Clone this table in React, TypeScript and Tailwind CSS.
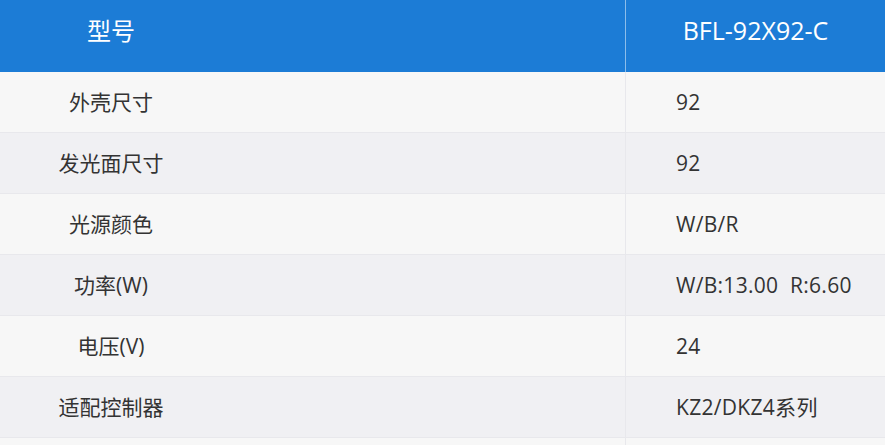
const ROWS = [
  { label: '外壳尺寸', value: '92' },
  { label: '发光面尺寸', value: '92' },
  { label: '光源颜色', value: 'W/B/R' },
  { label: '功率(W)', value: 'W/B:13.00\u00a0\u00a0R:6.60' },
  { label: '电压(V)', value: '24' },
  { label: '适配控制器', value: 'KZ2/DKZ4系列' },
  { label: '', value: '' },
]

export default function App() {
  return (
    <div
      className="w-[885px] h-[445px] overflow-hidden bg-[#f7f7f7] text-[#333]"
      style={{ fontFamily: '"Open Sans", "Noto Sans CJK SC", sans-serif' }}
    >
      {/* header */}
      <div className="grid grid-cols-[626px_1fr] h-[72px] bg-[#1c7cd6] text-white">
        <div className="flex items-center pb-[10px] border-r border-[#8cbdea]">
          <span className="w-[222px] text-center text-[24px]">型号</span>
        </div>
        <div className="flex items-center justify-center pb-[10px] text-[25px]">BFL-92X92-C</div>
      </div>

      {ROWS.map((row, i) => (
        <div
          key={i}
          className={`grid grid-cols-[626px_1fr] h-[61px] border-b border-[#e8e8ec] text-[21px] ${
            i % 2 === 0 ? 'bg-[#f7f7f7]' : 'bg-[#f0f0f3]'
          }`}
        >
          <div className="flex items-center pt-[2px] border-r border-[#e8e8ec]">
            <span className="w-[222px] text-center">{row.label}</span>
          </div>
          <div className="flex items-center pt-[2px] pl-[50px] tracking-[0.3px]">{row.value}</div>
        </div>
      ))}
    </div>
  )
}
